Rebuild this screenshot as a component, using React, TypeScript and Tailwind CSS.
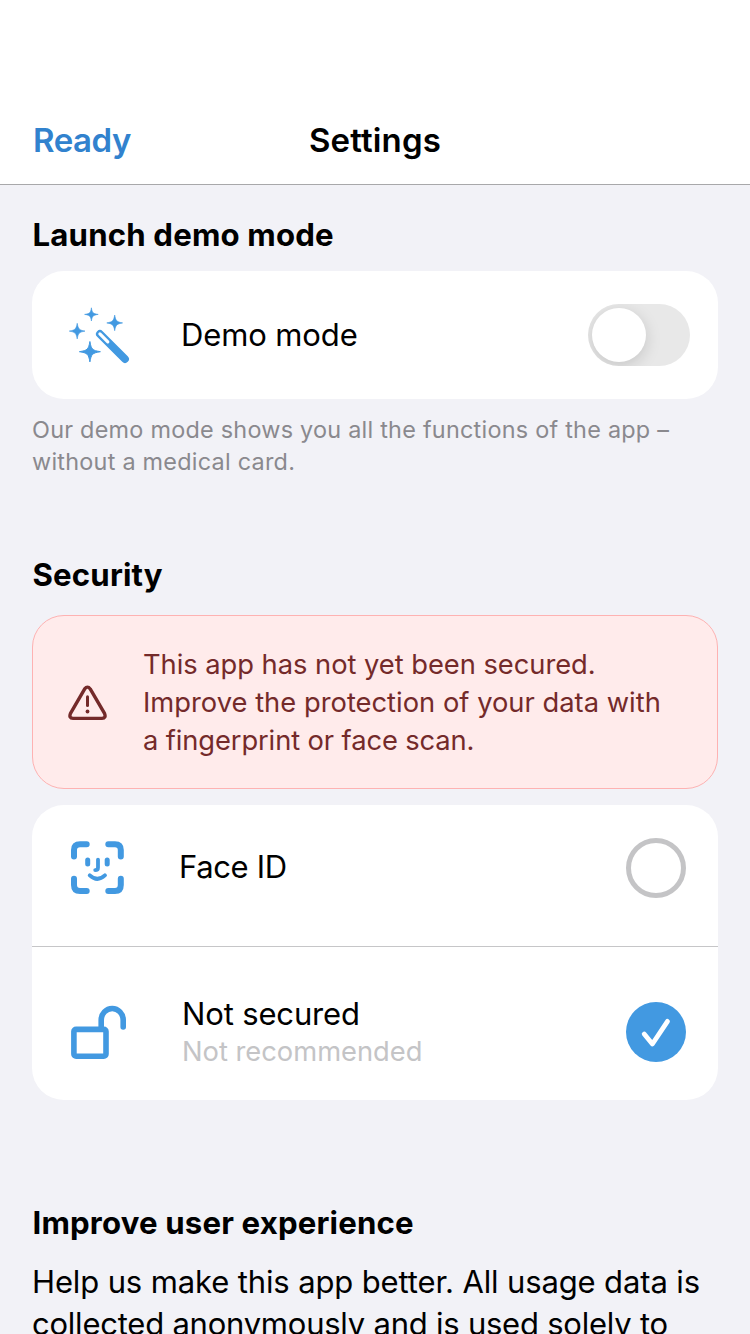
import type { ReactNode } from "react";

function WandIcon() {
  return (
    <svg className="h-[60px] w-16 shrink-0" viewBox="0 0 64 60" fill="#4299e1">
      <path d="M23.4 2.8C24.2 8 25 8.6 30.2 9.4C25 10.2 24.2 10.8 23.4 16C22.6 10.8 21.8 10.2 16.6 9.4C21.8 8.6 22.6 8 23.4 2.8Z" stroke="#4299e1" strokeWidth=".6" />
      <path d="M46.7 10.1C47.8 16 48.7 16.8 54.6 17.9C48.7 19 47.8 19.8 46.7 25.7C45.6 19.8 44.7 19 38.8 17.9C44.7 16.8 45.6 16 46.7 10.1Z" stroke="#4299e1" strokeWidth=".6" />
      <path d="M9.2 18.3C10.3 24.2 11.2 25 17 26.1C11.2 27.2 10.3 28 9.2 33.9C8.1 28 7.2 27.2 1.3 26.1C7.2 25 8.1 24.2 9.2 18.3Z" stroke="#4299e1" strokeWidth=".6" />
      <path d="M21.9 36.5C23.3 44.5 24.4 45.4 32.4 46.7C24.4 48 23.3 48.9 21.9 56.9C20.5 48.9 19.4 48 11.4 46.7C19.4 45.4 20.5 44.5 21.9 36.5Z" stroke="#4299e1" />
      <path d="M31.9 28.9L57 54" fill="none" stroke="#4299e1" strokeWidth="7.8" strokeLinecap="round" />
      <path d="M31.9 28.9L39.8 36.8" fill="none" stroke="white" strokeWidth="3.2" strokeLinecap="round" />
    </svg>
  );
}

function WarningIcon() {
  return (
    <svg className="mt-px h-9 w-10 shrink-0" viewBox="0 0 40 36" fill="none" stroke="#742a2a" strokeWidth="3.4" strokeLinecap="round" strokeLinejoin="round">
      <path d="M16.7 3.9Q19.5 .3 22.2 3.9L36.5 28.4Q38.4 33.2 34 33.4H5Q.6 33.2 2.5 28.4Z" />
      <path d="M19.5 11.8V20.4" strokeWidth="3" />
      <circle cx="19.5" cy="26.5" r="1.9" fill="#742a2a" stroke="none" />
    </svg>
  );
}

function FaceIcon() {
  return (
    <svg className="h-[54px] w-14 shrink-0" viewBox="0 0 56 54" fill="none" stroke="#4299e1" strokeWidth="6" strokeLinecap="round">
      <path d="M3 15.5V9Q3 3.2 9 3.2H15.7M37.3 3.2H44Q49.8 3.2 49.8 9V15.5M3 37.8V44Q3 50 9 50H15.7M37.3 50H44Q49.8 50 49.8 44V37.8" />
      <path d="M16.7 19V23M36.2 19V23" strokeWidth="5" />
      <path d="M27 18.6V26.4Q27 29.1 24.2 29.1" strokeWidth="3.8" />
      <path d="M18.8 34.4Q26.3 41.4 33.9 34.4" strokeWidth="4" />
    </svg>
  );
}

function UnlockIcon() {
  return (
    <svg className="h-[54px] w-14 shrink-0" viewBox="0 0 56 54" fill="none" stroke="#4299e1" strokeWidth="5.6" strokeLinecap="round">
      <rect x="2.9" y="24.4" width="32.1" height="26.8" rx="2.2" />
      <path d="M30.2 24V15A11 11.5 0 0 1 52.2 15V22" />
    </svg>
  );
}

function SectionTitle({ children }: { children: ReactNode }) {
  return <h2 className="pl-[0.5px] text-[31.2px] leading-[40px] font-bold tracking-[0.16px]">{children}</h2>;
}

export default function App() {
  return (
    <div className="h-[1334px] w-[750px] overflow-hidden bg-[#f2f2f7] font-['Inter',sans-serif] text-black">
      <header className="grid h-[185px] grid-cols-3 items-start border-b border-[#a8a8aa] bg-white px-[33px] pt-[119px] text-[33px] leading-[42px] font-semibold">
        <button className="text-left tracking-[-0.45px] text-[#3182ce]">Ready</button>
        <h1 className="text-center tracking-[0.15px]">Settings</h1>
      </header>
      <main className="px-8 pt-[30px]">
        <SectionTitle>Launch demo mode</SectionTitle>
        <section className="mt-4 flex h-32 items-center rounded-[32px] bg-white pr-7 pl-9">
          <WandIcon />
          <span className="ml-[49px] flex-1 text-[31px] tracking-[-0.12px]">Demo mode</span>
          <button role="switch" aria-checked="false" className="flex h-[62px] w-[102px] items-center overflow-hidden rounded-full bg-[#e8e8e8] p-1">
            <span className="size-[54px] rounded-full bg-white shadow-[0px_4px_16px_rgba(0,0,0,0.15)]" />
          </button>
        </section>
        <p className="mt-[15px] mb-[77px] text-[23.4px] leading-[32px] tracking-[0.25px] text-[#8a898e]">
          Our demo mode shows you all the functions of the app –<br />without a medical card.
        </p>
        <SectionTitle>Security</SectionTitle>
        <section className="mt-5 flex h-[174px] items-center rounded-[32px] border border-[#feb2b2] bg-[#ffebeb] pl-[35px] text-[#742a2a]">
          <WarningIcon />
          <p className="mt-0.5 ml-[35px] text-[27.3px] leading-[38px] whitespace-nowrap">
            <span className="tracking-[-0.03px]">This app has not yet been secured.</span><br />
            <span className="tracking-[0.02px]">Improve the protection of your data with</span><br />
            <span className="tracking-[-0.1px]">a fingerprint or face scan.</span>
          </p>
        </section>
        <section className="mt-4 mb-[103px] h-[295px] rounded-[32px] bg-white">
          <div className="flex h-[142px] items-start border-b border-[#c6c6c8] pr-8 pl-[39px]">
            <div className="mt-9"><FaceIcon /></div>
            <span className="mt-[42px] ml-[52px] flex-1 text-[31px] leading-[40px] tracking-[-0.35px]">Face ID</span>
            <span className="mt-[33px] size-[60px] rounded-full border-5 border-[#c4c4c6]" />
          </div>
          <div className="flex items-start pr-8 pl-[39px]">
            <div className="mt-[58px]"><UnlockIcon /></div>
            <div className="mt-[47px] ml-[55px] flex-1">
              <p className="text-[31px] leading-[40px] tracking-[-0.15px]">Not secured</p>
              <p className="text-[27.3px] leading-[36px] text-[#c4c4c6]">Not recommended</p>
            </div>
            <span className="mt-[55px] flex size-[60px] items-center justify-center rounded-full bg-[#4299e1]">
              <svg className="size-[60px]" viewBox="0 0 60 60" fill="none" stroke="white" strokeWidth="4.8" strokeLinecap="round" strokeLinejoin="round">
                <path d="M18.2 32L26.4 42L41.5 19.4" />
              </svg>
            </span>
          </div>
        </section>
        <SectionTitle>Improve user experience</SectionTitle>
        <p className="mt-[18px] text-[31px] leading-[42px] whitespace-nowrap">
          <span className="tracking-[-0.13px]">Help us make this app better. All usage data is</span><br />
          <span className="tracking-[-0.23px]">collected anonymously and is used solely to</span>
        </p>
      </main>
    </div>
  );
}
